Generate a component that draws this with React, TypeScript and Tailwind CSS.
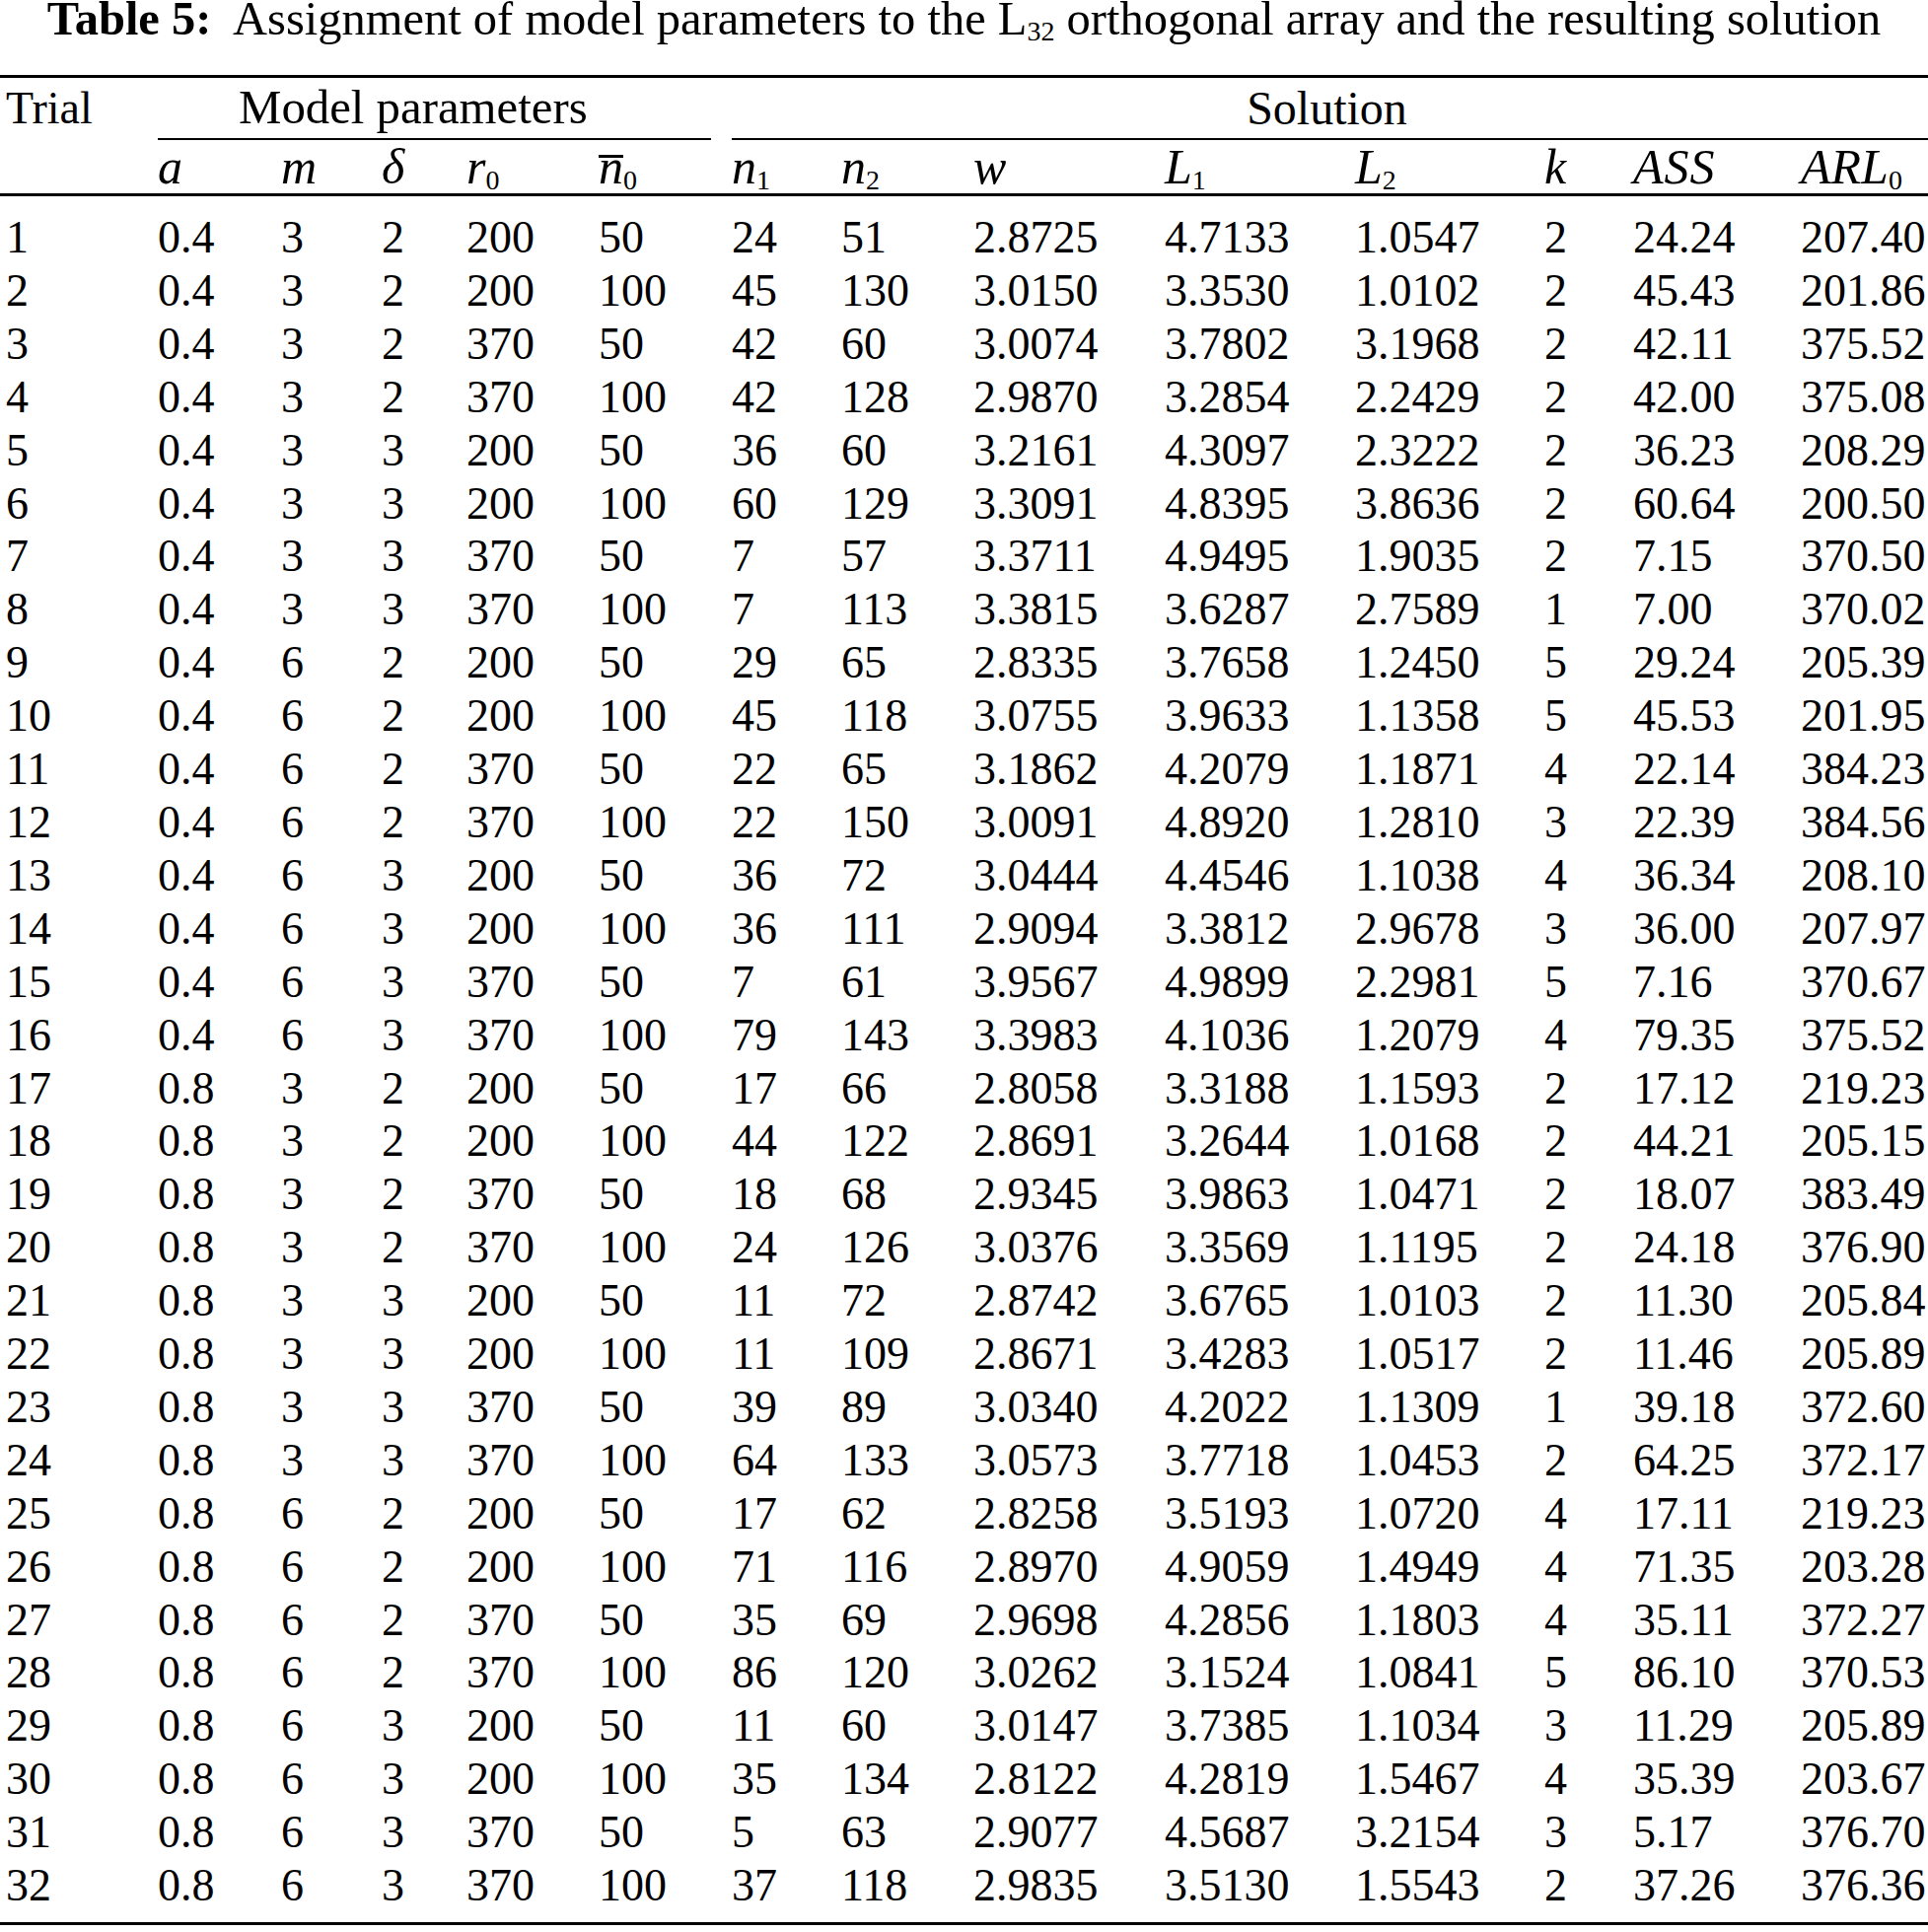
import React from 'react';

const rows: string[][] = [
  ['1', '0.4', '3', '2', '200', '50', '24', '51', '2.8725', '4.7133', '1.0547', '2', '24.24', '207.40'],
  ['2', '0.4', '3', '2', '200', '100', '45', '130', '3.0150', '3.3530', '1.0102', '2', '45.43', '201.86'],
  ['3', '0.4', '3', '2', '370', '50', '42', '60', '3.0074', '3.7802', '3.1968', '2', '42.11', '375.52'],
  ['4', '0.4', '3', '2', '370', '100', '42', '128', '2.9870', '3.2854', '2.2429', '2', '42.00', '375.08'],
  ['5', '0.4', '3', '3', '200', '50', '36', '60', '3.2161', '4.3097', '2.3222', '2', '36.23', '208.29'],
  ['6', '0.4', '3', '3', '200', '100', '60', '129', '3.3091', '4.8395', '3.8636', '2', '60.64', '200.50'],
  ['7', '0.4', '3', '3', '370', '50', '7', '57', '3.3711', '4.9495', '1.9035', '2', '7.15', '370.50'],
  ['8', '0.4', '3', '3', '370', '100', '7', '113', '3.3815', '3.6287', '2.7589', '1', '7.00', '370.02'],
  ['9', '0.4', '6', '2', '200', '50', '29', '65', '2.8335', '3.7658', '1.2450', '5', '29.24', '205.39'],
  ['10', '0.4', '6', '2', '200', '100', '45', '118', '3.0755', '3.9633', '1.1358', '5', '45.53', '201.95'],
  ['11', '0.4', '6', '2', '370', '50', '22', '65', '3.1862', '4.2079', '1.1871', '4', '22.14', '384.23'],
  ['12', '0.4', '6', '2', '370', '100', '22', '150', '3.0091', '4.8920', '1.2810', '3', '22.39', '384.56'],
  ['13', '0.4', '6', '3', '200', '50', '36', '72', '3.0444', '4.4546', '1.1038', '4', '36.34', '208.10'],
  ['14', '0.4', '6', '3', '200', '100', '36', '111', '2.9094', '3.3812', '2.9678', '3', '36.00', '207.97'],
  ['15', '0.4', '6', '3', '370', '50', '7', '61', '3.9567', '4.9899', '2.2981', '5', '7.16', '370.67'],
  ['16', '0.4', '6', '3', '370', '100', '79', '143', '3.3983', '4.1036', '1.2079', '4', '79.35', '375.52'],
  ['17', '0.8', '3', '2', '200', '50', '17', '66', '2.8058', '3.3188', '1.1593', '2', '17.12', '219.23'],
  ['18', '0.8', '3', '2', '200', '100', '44', '122', '2.8691', '3.2644', '1.0168', '2', '44.21', '205.15'],
  ['19', '0.8', '3', '2', '370', '50', '18', '68', '2.9345', '3.9863', '1.0471', '2', '18.07', '383.49'],
  ['20', '0.8', '3', '2', '370', '100', '24', '126', '3.0376', '3.3569', '1.1195', '2', '24.18', '376.90'],
  ['21', '0.8', '3', '3', '200', '50', '11', '72', '2.8742', '3.6765', '1.0103', '2', '11.30', '205.84'],
  ['22', '0.8', '3', '3', '200', '100', '11', '109', '2.8671', '3.4283', '1.0517', '2', '11.46', '205.89'],
  ['23', '0.8', '3', '3', '370', '50', '39', '89', '3.0340', '4.2022', '1.1309', '1', '39.18', '372.60'],
  ['24', '0.8', '3', '3', '370', '100', '64', '133', '3.0573', '3.7718', '1.0453', '2', '64.25', '372.17'],
  ['25', '0.8', '6', '2', '200', '50', '17', '62', '2.8258', '3.5193', '1.0720', '4', '17.11', '219.23'],
  ['26', '0.8', '6', '2', '200', '100', '71', '116', '2.8970', '4.9059', '1.4949', '4', '71.35', '203.28'],
  ['27', '0.8', '6', '2', '370', '50', '35', '69', '2.9698', '4.2856', '1.1803', '4', '35.11', '372.27'],
  ['28', '0.8', '6', '2', '370', '100', '86', '120', '3.0262', '3.1524', '1.0841', '5', '86.10', '370.53'],
  ['29', '0.8', '6', '3', '200', '50', '11', '60', '3.0147', '3.7385', '1.1034', '3', '11.29', '205.89'],
  ['30', '0.8', '6', '3', '200', '100', '35', '134', '2.8122', '4.2819', '1.5467', '4', '35.39', '203.67'],
  ['31', '0.8', '6', '3', '370', '50', '5', '63', '2.9077', '4.5687', '3.2154', '3', '5.17', '376.70'],
  ['32', '0.8', '6', '3', '370', '100', '37', '118', '2.9835', '3.5130', '1.5543', '2', '37.26', '376.36'],
];

const cols =
  'grid grid-cols-[154px_125px_102px_86px_134px_135px_111px_134px_194px_193px_192px_90px_170px_129px] pl-[6px]';

// small upright subscript used in the title and the header
const Sub: React.FC<{ children: React.ReactNode }> = ({ children }) => (
  <span className="relative top-[6px] not-italic text-[28px]">{children}</span>
);

export default function App() {
  return (
    <div className="w-[1955px] h-[1959px] bg-white text-black font-['Liberation_Serif']">
      {/* caption */}
      <div className="h-[40px] text-center text-[48.5px] leading-[38px] whitespace-nowrap">
        <span className="font-bold">Table 5:</span>
        <span>
          {'\u00a0 '}Assignment of model parameters to the L<Sub>32</Sub> orthogonal array and the resulting solution
        </span>
      </div>

      <div className="mt-[36px] border-t-[3px] border-black">
        {/* header group row */}
        <div className={`${cols} h-[63px] leading-[61px] text-[48px]`}>
          <div className="text-[46px]">Trial</div>
          <div className="col-span-5 mr-[21px] border-b-2 border-black pl-[82px] text-[48.8px]">Model parameters</div>
          <div className="col-span-8 border-b-2 border-black text-center pr-[6px]">Solution</div>
        </div>

        {/* symbol row */}
        <div className={`${cols} h-[57px] leading-[54px] text-[50px] italic border-b-[3px] border-black`}>
          <div />
          <div>a</div>
          <div>m</div>
          <div>δ</div>
          <div>
            r<Sub>0</Sub>
          </div>
          <div>
            <span className="inline-block leading-[18px] border-t-[3px] border-black">n</span>
            <Sub>0</Sub>
          </div>
          <div>
            n<Sub>1</Sub>
          </div>
          <div>
            n<Sub>2</Sub>
          </div>
          <div>w</div>
          <div>
            L<Sub>1</Sub>
          </div>
          <div>
            L<Sub>2</Sub>
          </div>
          <div>k</div>
          <div className="tracking-[1px]">ASS</div>
          <div>
            ARL<Sub>0</Sub>
          </div>
        </div>

        {/* body */}
        <div className="pt-[15px] pb-[10px] border-b-[3px] border-black text-[46px]">
          {rows.map((r) => (
            <div key={r[0]} className={`${cols} h-[53.92px] leading-[53.92px]`}>
              {r.map((v, i) => (
                <div key={i}>{v}</div>
              ))}
            </div>
          ))}
        </div>
      </div>
    </div>
  );
}
